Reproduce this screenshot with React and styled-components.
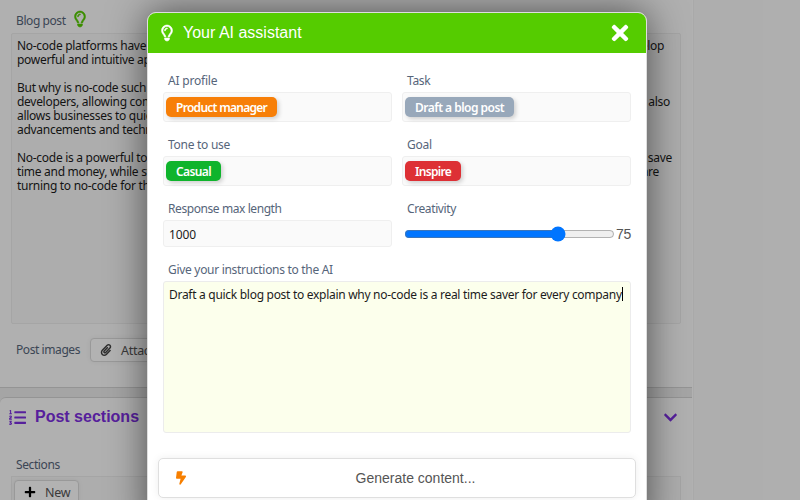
import React from "react";
import styled, { createGlobalStyle } from "styled-components";
import { FaRegLightbulb, FaBoltLightning } from "react-icons/fa6";
import { FaTimes, FaListOl, FaPaperclip, FaChevronDown, FaPlus } from "react-icons/fa";

const Global = createGlobalStyle`
  *, *::before, *::after { box-sizing: border-box; }
  html, body { margin: 0; height: 500px; overflow: hidden; }
  body { font: 12px/14px "Noto Sans", sans-serif; letter-spacing: -0.29px; color: #1c1c1c; background: #fafafa; }
`;

const Screen = styled.div`
  position: relative;
  width: 800px;
  height: 500px;
  overflow: hidden;
  background: #fafafa;
`;

const Page = styled.main`
  width: 693px;
  height: 500px;
  display: flex;
  flex-direction: column;
  gap: 9px;
  background: #ededed;
  border-right: 1px solid #fff;
  box-shadow: 1px 0 0 rgba(0, 0, 0, 0.03);
`;

const Card = styled.section`
  display: flex;
  flex-direction: column;
  height: ${(p) => p.$height}px;
  flex: none;
  padding: 0 11px;
  background: #fcfcfc;
  border-bottom: 1px solid #d4d4d4;
  border-top: ${(p) => (p.$topLine ? "1px solid #d4d4d4" : "0")};
  border-top-left-radius: ${(p) => (p.$topLine ? 6 : 0)}px;
`;

const Label = styled.label`
  display: flex;
  align-items: center;
  height: 24px;
  padding: 2px 0 0 5px;
  gap: 8px;
  color: #56657a;
  white-space: nowrap;
  letter-spacing: ${(p) => p.$ls || -0.3}px;
`;

const Bulb = styled(FaRegLightbulb)`
  width: 12px;
  height: 16px;
  flex: none;
  overflow: visible;
  stroke: currentColor;
  stroke-width: 18px;
`;

const TitleLabel = styled(Label)`
  margin-top: 7px;
  height: 26px;
`;

const LabelBulb = styled(Bulb)`
  margin-top: -4px;
  color: #55cc00;
`;

const PostText = styled.div`
  width: 670px;
  height: 291px;
  padding: 5px;
  border: 1px solid #ececec;
  border-radius: 2px;
  background: #f8f8f8;
`;

const Line = styled.div`
  display: flex;
  justify-content: space-between;
  height: 14px;
  width: ${(p) => p.$width || 650}px;
  white-space: nowrap;
`;

const ImagesRow = styled.div`
  display: flex;
  align-items: center;
  gap: 10px;
  margin-top: 14px;
`;

const ImagesLabel = styled(Label)`
  padding-top: 0;
`;

const SmallButton = styled.button`
  display: flex;
  align-items: center;
  gap: ${(p) => p.$gap}px;
  height: 24px;
  width: ${(p) => p.$width}px;
  padding: 0 9px;
  border: 1px solid #dcdcdc;
  border-radius: 4px;
  background: #fff;
  color: #555;
  font: 12.5px "Noto Sans", sans-serif;
  letter-spacing: -0.3px;
  white-space: nowrap;
  box-shadow: 0 0 5px rgba(0, 0, 0, 0.06);
  svg { color: ${(p) => p.$icon}; flex: none; }
`;

const SectionHeader = styled.header`
  display: flex;
  align-items: center;
  height: 38px;
  margin: 0 3px 0 -2px;
  color: #7c2ee0;
`;

const SectionTitle = styled.h2`
  flex: 1;
  margin: 0 0 0 9px;
  font: bold 16px "Liberation Sans", sans-serif;
  letter-spacing: 0;
`;

const SectionsLabel = styled(Label)`
  margin-top: 16px;
`;

const SectionList = styled.div`
  padding: 3px 2px;
  width: 670px;
  height: 60px;
  border: 1px solid #ececec;
  background: #f8f8f8;
`;

const Overlay = styled.div`
  position: absolute;
  inset: 0;
  padding: 12px 0 0 147px;
  background: rgba(0, 0, 0, 0.3);
`;

const Dialog = styled.div`
  width: 500px;
  height: 520px;
  overflow: hidden;
  border: 1px solid #dedede;
  border-radius: 9px;
  background: #fff;
  box-shadow: 0 0 38px rgba(0, 0, 0, 0.57);
`;

const DialogHeader = styled.header`
  display: flex;
  align-items: center;
  height: 40px;
  padding: 0 14px 0 13px;
  background: #55cc00;
  color: #fff;
`;

const DialogTitle = styled.h1`
  flex: 1;
  margin: 0 0 0 10px;
  font: 16px "Liberation Sans", sans-serif;
  letter-spacing: 0;
`;

const CloseIcon = styled(FaTimes)`
  width: 24px;
  height: 24px;
`;

const Form = styled.form`
  display: grid;
  grid-template-columns: 229px 229px;
  column-gap: 10px;
  padding: 15px 15px 0;
`;

const Field = styled.div`
  grid-column: ${(p) => (p.$wide ? "1 / -1" : "auto")};
  height: ${(p) => p.$height}px;
`;

const TagBox = styled.div`
  height: 30px;
  padding: 4px 2px;
  border: 1px solid #efefef;
  border-radius: 3px;
  background: #fafafa;
`;

const Tag = styled.span`
  display: flex;
  align-items: center;
  width: ${(p) => p.$width}px;
  height: 20px;
  padding: 1px 0 0 10px;
  border-radius: 5px;
  background: ${(p) => p.$color};
  color: #fff;
  font-weight: 600;
  white-space: nowrap;
  letter-spacing: ${(p) => p.$ls}px;
  box-shadow: 2px 2px 4px rgba(0, 0, 0, 0.17);
`;

const NumberBox = styled.div`
  display: flex;
  align-items: center;
  height: 27px;
  padding: 2px 5px 0;
  border: 1px solid #efefef;
  border-radius: 3px;
  background: #fafafa;
  letter-spacing: -0.15px;
`;

const SliderRow = styled.div`
  display: flex;
  align-items: center;
  height: 27px;
  padding-left: 2px;
  gap: 1px;
  color: #555;
  font: 14px "Liberation Sans", sans-serif;
  letter-spacing: -0.3px;
`;

const Slider = styled.input`
  flex: none;
  width: 211px;
  height: 16px;
  margin: 0;
`;

const Instructions = styled.div`
  display: flex;
  align-items: flex-start;
  height: 152px;
  padding: 6px 5px;
  border: 1px solid #ececec;
  border-radius: 3px;
  background: #fcffec;
  white-space: nowrap;
`;

const Caret = styled.i`
  width: 1px;
  height: 14px;
  margin-top: -1px;
  background: #000;
`;

const Generate = styled.button`
  display: flex;
  align-items: center;
  width: 478px;
  height: 40px;
  margin: 0 0 0 10px;
  padding: 0 17px;
  border: 1px solid #dfdfdf;
  border-radius: 5px;
  background: #fff;
  color: #555;
  font: 14px "Liberation Sans", sans-serif;
  box-shadow: 0 0 8px rgba(0, 0, 0, 0.07);
  svg { width: 10px; color: #f77f00; flex: none; }
`;

const GenerateText = styled.span`
  flex: 1;
  padding-left: 27px;
  text-align: center;
  letter-spacing: 0;
`;

const LINES = [
  ["No-code platforms have", "develop", 647],
  ["powerful and intuitive apps", "", 650],
  ["", "", 650],
  ["But why is no-code such", "", 650],
  ["developers, allowing com", "also", 653],
  ["allows businesses to quic", "", 650],
  ["advancements and techn", "", 650],
  ["", "", 650],
  ["No-code is a powerful to", "save", 655],
  ["time and money, while st", "are", 642],
  ["turning to no-code for th", "", 650],
];

const TAGS = [
  { label: "AI profile", ls: -0.2, value: "Product manager", color: "#f77f08", width: 111, tagLs: -0.72 },
  { label: "Task", ls: -0.3, value: "Draft a blog post", color: "#98a8ba", width: 109, tagLs: -0.52 },
  { label: "Tone to use", ls: -0.27, value: "Casual", color: "#0fb42c", width: 55, tagLs: -0.6 },
  { label: "Goal", ls: -0.25, value: "Inspire", color: "#dd3035", width: 56, tagLs: -0.7 },
];

export default function App() {
  return (
    <Screen>
      <Global />
      <Page>
        <Card $height={388}>
          <TitleLabel $ls={-0.42}>
            Blog post <LabelBulb />
          </TitleLabel>
          <PostText>
            {LINES.map(([left, right, width], i) => (
              <Line key={i} $width={width}>
                <span>{left}</span>
                <span>{right}</span>
              </Line>
            ))}
          </PostText>
          <ImagesRow>
            <ImagesLabel $ls={-0.42}>Post images</ImagesLabel>
            <SmallButton $width={90} $gap={9} $icon="#444">
              <FaPaperclip size={12} /> Attach
            </SmallButton>
          </ImagesRow>
        </Card>
        <Card $height={150} $topLine>
          <SectionHeader>
            <FaListOl size={17} />
            <SectionTitle>Post sections</SectionTitle>
            <FaChevronDown size={15} />
          </SectionHeader>
          <SectionsLabel $ls={-0.4}>Sections</SectionsLabel>
          <SectionList>
            <SmallButton $width={65} $gap={9} $icon="#000">
              <FaPlus size={12} /> New
            </SmallButton>
          </SectionList>
        </Card>
      </Page>
      <Overlay>
        <Dialog role="dialog">
          <DialogHeader>
            <Bulb />
            <DialogTitle>Your AI assistant</DialogTitle>
            <CloseIcon />
          </DialogHeader>
          <Form>
            {TAGS.map((t) => (
              <Field key={t.label} $height={64}>
                <Label $ls={t.ls}>{t.label}</Label>
                <TagBox>
                  <Tag $color={t.color} $width={t.width} $ls={t.tagLs}>{t.value}</Tag>
                </TagBox>
              </Field>
            ))}
            <Field $height={61}>
              <Label $ls={-0.42}>Response max length</Label>
              <NumberBox>1000</NumberBox>
            </Field>
            <Field $height={61}>
              <Label $ls={-0.4}>Creativity</Label>
              <SliderRow>
                <Slider type="range" min="0" max="100" defaultValue="75" />
                75
              </SliderRow>
            </Field>
            <Field $wide $height={201}>
              <Label>Give your instructions to the AI</Label>
              <Instructions>
                <span>
                  Draft a quick blog post to explain why no-code is a real time saver for every company
                </span>
                <Caret />
              </Instructions>
            </Field>
          </Form>
          <Generate type="button">
            <FaBoltLightning size={14} />
            <GenerateText>Generate content...</GenerateText>
          </Generate>
        </Dialog>
      </Overlay>
    </Screen>
  );
}
